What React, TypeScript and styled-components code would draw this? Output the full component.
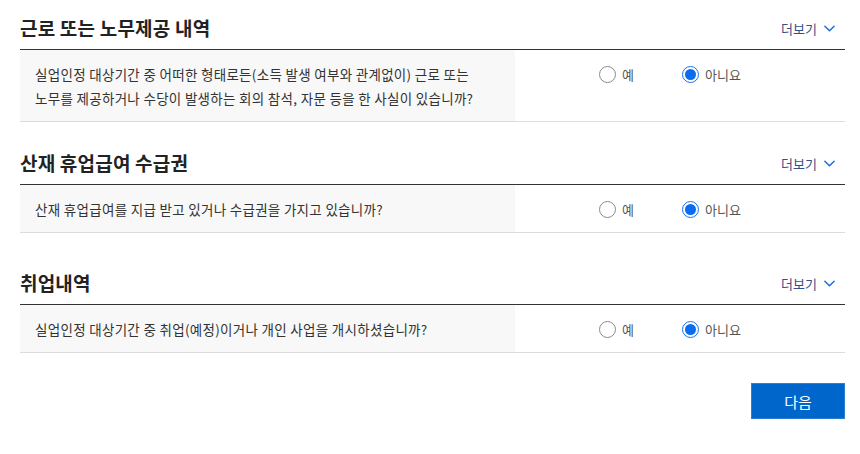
import React, { useState } from 'react';
import styled, { createGlobalStyle } from 'styled-components';

const GlobalStyle = createGlobalStyle`
    html, body {
        margin: 0;
        padding: 0;
        background: #ffffff;
    }
    body {
        font-family: "Noto Sans CJK KR", "Noto Sans", sans-serif;
        color: #333;
    }
`;

// --- layout ---
const Page = styled.div`
    margin: 0 15px 0 20px;
    padding-bottom: 30px;
`;

const Section = styled.section<{ $gap: number }>`
    margin-top: ${p => p.$gap}px;
`;

const SectionHeader = styled.div`
    display: flex;
    align-items: center;
    justify-content: space-between;
    padding: 13px 0 6px 0;
    border-bottom: 1px solid #333;
`;

const Title = styled.h3`
    margin: 0;
    font-size: 19px;
    line-height: 30px;
    font-weight: 700;
    color: #222;
    letter-spacing: 0.2px;
`;

const MoreLink = styled.button`
    display: inline-flex;
    align-items: center;
    gap: 6px;
    margin-right: 9px;
    padding: 0;
    border: none;
    background: transparent;
    font-family: inherit;
    font-size: 13px;
    color: #34508a;
    cursor: pointer;

    svg {
        width: 13px;
        height: 13px;
    }
`;

const Row = styled.div`
    display: flex;
    border-bottom: 1px solid #dcdcdc;
`;

const Question = styled.div`
    width: 495px;
    box-sizing: border-box;
    padding: 12px 10px 11px 15px;
    background: #f8f8f8;
    font-size: 13.5px;
    line-height: 24px;
    letter-spacing: 0.3px;
    color: #333;
    white-space: nowrap;
`;

const Answer = styled.div`
    flex: 1;
    display: flex;
    align-items: flex-start;
    padding: 12px 0 0 84px;
`;

const Option = styled.label`
    width: 83px;
    display: flex;
    align-items: center;
    gap: 6px;
    height: 24px;
    font-size: 13px;
    color: #555;
    cursor: pointer;
`;

const RadioCircle = styled.span<{ $checked: boolean }>`
    width: 17px;
    height: 17px;
    box-sizing: border-box;
    border-radius: 50%;
    border: 1px solid ${p => (p.$checked ? '#1a73e8' : '#8a8a8a')};
    display: flex;
    align-items: center;
    justify-content: center;
    background: #fff;

    &::after {
        content: '';
        width: 11px;
        height: 11px;
        border-radius: 50%;
        background: #0a6cf0;
        display: ${p => (p.$checked ? 'block' : 'none')};
    }
`;

const HiddenInput = styled.input`
    display: none;
`;

const Footer = styled.div`
    display: flex;
    justify-content: flex-end;
    margin-top: 30px;
`;

const NextButton = styled.button`
    width: 94px;
    height: 36px;
    border: 1px solid #2a7fd0;
    background: #0066cc;
    color: #fff;
    font-family: inherit;
    font-size: 15px;
    cursor: pointer;
`;

const Chevron = () => (
    <svg viewBox="0 0 14 14" fill="none" stroke="#1a6fd6" strokeWidth="1.6" strokeLinecap="round" strokeLinejoin="round">
        <polyline points="2 4.5 7 9.5 12 4.5" />
    </svg>
);

const SECTIONS = [
    {
        title: '근로 또는 노무제공 내역',
        gap: 0,
        question: [
            '실업인정 대상기간 중 어떠한 형태로든(소득 발생 여부와 관계없이) 근로 또는',
            '노무를 제공하거나 수당이 발생하는 회의 참석, 자문 등을 한 사실이 있습니까?',
        ],
    },
    {
        title: '산재 휴업급여 수급권',
        gap: 13,
        question: ['산재 휴업급여를 지급 받고 있거나 수급권을 가지고 있습니까?'],
    },
    {
        title: '취업내역',
        gap: 22,
        question: ['실업인정 대상기간 중 취업(예정)이거나 개인 사업을 개시하셨습니까?'],
    },
];

const App: React.FC = () => {
    const [answers, setAnswers] = useState<string[]>(['no', 'no', 'no']);

    const choose = (i: number, v: string) => {
        setAnswers(prev => prev.map((a, idx) => (idx === i ? v : a)));
    };

    return (
        <>
            <GlobalStyle />
            <Page>
                {SECTIONS.map((s, i) => (
                    <Section key={i} $gap={s.gap}>
                        <SectionHeader>
                            <Title>{s.title}</Title>
                            <MoreLink>
                                더보기 <Chevron />
                            </MoreLink>
                        </SectionHeader>
                        <Row>
                            <Question>
                                {s.question.map((line, k) => (
                                    <div key={k}>{line}</div>
                                ))}
                            </Question>
                            <Answer>
                                <Option onClick={() => choose(i, 'yes')}>
                                    <HiddenInput type="radio" name={`q${i}`} readOnly checked={answers[i] === 'yes'} />
                                    <RadioCircle $checked={answers[i] === 'yes'} />
                                    예
                                </Option>
                                <Option onClick={() => choose(i, 'no')}>
                                    <HiddenInput type="radio" name={`q${i}`} readOnly checked={answers[i] === 'no'} />
                                    <RadioCircle $checked={answers[i] === 'no'} />
                                    아니요
                                </Option>
                            </Answer>
                        </Row>
                    </Section>
                ))}
                <Footer>
                    <NextButton>다음</NextButton>
                </Footer>
            </Page>
        </>
    );
};

export default App;
